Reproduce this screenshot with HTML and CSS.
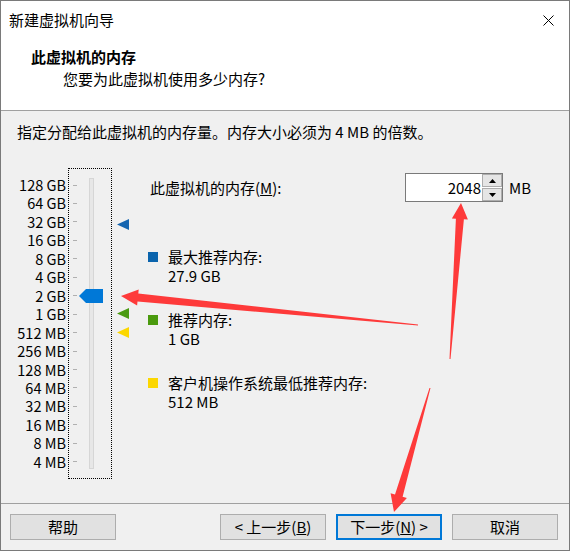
FILE: index.html
```html
<!DOCTYPE html>
<html lang="zh-CN">
<head>
  <meta charset="UTF-8">
  <meta name="viewport" content="width=device-width, initial-scale=1.0">
  <title>新建虚拟机向导</title>
  <link rel="stylesheet" href="styles.css">
</head>
<body>
  <div class="window">
    <div class="top">
      <div class="titlebar">
        <span class="title">新建虚拟机向导</span>
        <svg class="close" width="11" height="11" viewBox="0 0 11 11">
          <path d="M0.5 0.5L10.5 10.5M10.5 0.5L0.5 10.5" stroke="#000" stroke-width="1"/>
        </svg>
      </div>
      <h1>此虚拟机的内存</h1>
      <p class="subtitle">您要为此虚拟机使用多少内存?</p>
    </div>

    <div class="content">
      <p class="intro">指定分配给此虚拟机的内存量。内存大小必须为 4 MB 的倍数。</p>

      <div class="main">
        <ul class="labels">
          <li>128 GB</li>
          <li>64 GB</li>
          <li>32 GB</li>
          <li>16 GB</li>
          <li>8 GB</li>
          <li>4 GB</li>
          <li>2 GB</li>
          <li>1 GB</li>
          <li>512 MB</li>
          <li>256 MB</li>
          <li>128 MB</li>
          <li>64 MB</li>
          <li>32 MB</li>
          <li>16 MB</li>
          <li>8 MB</li>
          <li>4 MB</li>
        </ul>

        <div class="slider">
          <div class="ticks">
            <span></span><span></span><span></span><span></span>
            <span></span><span></span><span></span><span></span>
            <span></span><span></span><span></span><span></span>
            <span></span><span></span><span></span><span></span>
          </div>
          <div class="track"></div>
          <svg class="thumb" width="24" height="14" viewBox="0 0 24 14">
            <polygon points="0,7 7,0 24,0 24,14 7,14" fill="#0078d7"/>
          </svg>
        </div>

        <div class="markers">
          <svg class="marker marker-max" width="12" height="11" viewBox="0 0 12 11">
            <polygon points="0,5.5 12,0 12,11" fill="#1565b0"/>
          </svg>
          <svg class="marker marker-rec" width="12" height="11" viewBox="0 0 12 11">
            <polygon points="0,5.5 12,0 12,11" fill="#4b9a12"/>
          </svg>
          <svg class="marker marker-min" width="12" height="11" viewBox="0 0 12 11">
            <polygon points="0,5.5 12,0 12,11" fill="#fcd700"/>
          </svg>
        </div>

        <div class="settings">
          <div class="memory-row">
            <label class="memory-label">此虚拟机的内存(<u>M</u>):</label>
            <div class="spin">
              <span class="spin-value">2048</span>
              <div class="spin-buttons">
                <span class="spin-btn">
                  <svg width="7" height="4" viewBox="0 0 7 4"><polygon points="3.5,0 7,4 0,4" fill="#000"/></svg>
                </span>
                <span class="spin-btn">
                  <svg width="7" height="4" viewBox="0 0 7 4"><polygon points="0,0 7,0 3.5,4" fill="#000"/></svg>
                </span>
              </div>
            </div>
            <span class="unit">MB</span>
          </div>

          <div class="legend">
            <div class="legend-item">
              <span class="swatch swatch-max"></span>
              <div>
                <div>最大推荐内存:</div>
                <div>27.9 GB</div>
              </div>
            </div>
            <div class="legend-item">
              <span class="swatch swatch-rec"></span>
              <div>
                <div>推荐内存:</div>
                <div>1 GB</div>
              </div>
            </div>
            <div class="legend-item">
              <span class="swatch swatch-min"></span>
              <div>
                <div>客户机操作系统最低推荐内存:</div>
                <div>512 MB</div>
              </div>
            </div>
          </div>
        </div>
      </div>
    </div>

    <div class="footer">
      <button class="btn">帮助</button>
      <div class="nav">
        <button class="btn">&lt; 上一步(<u>B</u>)</button>
        <button class="btn btn-default">下一步(<u>N</u>) &gt;</button>
        <button class="btn">取消</button>
      </div>
    </div>

    <!-- red annotation arrows drawn on top of the dialog -->
    <svg class="annotations" width="570" height="551" viewBox="0 0 570 551">
      <polygon fill="#fe3a3a" points="121,296 138.7,289.6 138.3,293.6 418,324.4 418,325.6 137.5,301.6 137.1,305.6"/>
      <polygon fill="#fe3a3a" points="461,203 467.9,219.5 463.9,219.3 450.5,359 449.5,359 455.9,218.7 451.9,218.4"/>
      <polygon fill="#fe3a3a" points="394,512 406.9,498.1 402.6,496.8 430.5,388.1 429.5,387.9 395,494.6 390.6,493.3"/>
    </svg>
  </div>
</body>
</html>
```

FILE: styles.css
```css
* {
  box-sizing: border-box;
}
body {
  margin: 0;
  font-family: "Noto Sans CJK SC", "Noto Sans", sans-serif;
  font-size: 15px;
  color: #000;
  background: #f0f0f0;
}
.window {
  position: relative;
  width: 570px;
  height: 551px;
  border: 1px solid #7a7a7a;
  background: #f0f0f0;
}

/* header */
.top {
  height: 110px;
  background: #fff;
  border-bottom: 1px solid #a0a0a0;
}
.titlebar {
  height: 36px;
  padding: 9px 15px 0 8px;
  display: flex;
  justify-content: space-between;
  align-items: flex-start;
}
.title {
  line-height: 20px;
}
.close {
  margin-top: 5px;
}
h1 {
  margin: 9px 0 0 30px;
  font-size: 15px;
  font-weight: bold;
  line-height: 22px;
}
.subtitle {
  margin: 0 0 0 62px;
  line-height: 22px;
}

/* body */
.content {
  height: 392px;
  padding-top: 11px;
}
.intro {
  margin: 0 0 0 16px;
  line-height: 20px;
}
.main {
  display: flex;
  margin-top: 26px;
}
.labels {
  list-style: none;
  margin: 8px 2px 0 0;
  padding: 0;
  width: 65px;
  height: 295px;
  display: flex;
  flex-direction: column;
  justify-content: space-between;
  text-align: right;
  font-size: 14.5px;
}
.labels li {
  line-height: 18px;
  height: 18px;
}
.slider {
  position: relative;
  display: flex;
  width: 44px;
  height: 311px;
  border: 1px dotted #000;
}
.ticks {
  margin: 7px 0 0 4px;
  width: 4px;
  height: 295px;
  display: flex;
  flex-direction: column;
  justify-content: space-between;
}
.ticks span {
  height: 18px;
  display: flex;
  align-items: center;
}
.ticks span::after {
  content: "";
  width: 4px;
  height: 1px;
  background: #b0b0b0;
}
.track {
  margin: 9px 0 0 12px;
  width: 5px;
  height: 291px;
  border: 1px solid #d6d6d6;
  background: #e7e7e7;
}
.thumb {
  position: absolute;
  left: 10px;
  top: 120px;
}
.markers {
  position: relative;
  width: 12px;
  margin-left: 5px;
}
.marker {
  position: absolute;
  left: 0;
}
.marker-max { top: 51px; }
.marker-rec { top: 140px; }
.marker-min { top: 159px; }

.settings {
  margin-left: 19px;
  padding-top: 5px;
}
.memory-row {
  display: flex;
  align-items: center;
  height: 29px;
}
.memory-label {
  width: 257px;
  padding-left: 2px;
  line-height: 20px;
}
.spin {
  display: flex;
  width: 98px;
  height: 29px;
  border: 1px solid #7a7a7a;
  background: #fff;
}
.spin-value {
  flex: 1;
  text-align: right;
  padding-right: 1px;
  line-height: 27px;
}
.spin-buttons {
  display: flex;
  flex-direction: column;
  gap: 1px;
  width: 20px;
}
.spin-btn {
  flex: 1;
  display: flex;
  align-items: center;
  justify-content: center;
  background: #e5e5e5;
  border: 1px solid #adadad;
}
.unit {
  margin-left: 6px;
  line-height: 20px;
}

.legend {
  margin-top: 45px;
  display: flex;
  flex-direction: column;
  gap: 25px;
}
.legend-item {
  display: flex;
  line-height: 19px;
}
.swatch {
  width: 10px;
  height: 10px;
  margin: 5px 10px 0 0;
}
.swatch-max { background: #0a64ad; }
.swatch-rec { background: #4a9a0e; }
.swatch-min { background: #fcd700; }

/* footer */
.footer {
  display: flex;
  justify-content: space-between;
  border-top: 1px solid #a0a0a0;
  padding: 10px 11px 0 9px;
}
.nav {
  display: flex;
  gap: 10px;
}
.btn {
  width: 106px;
  height: 26px;
  padding: 0;
  font-family: inherit;
  font-size: 15px;
  line-height: 22px;
  color: #000;
  background: #e1e1e1;
  border: 1px solid #adadad;
}
.btn-default {
  border: 2px solid #0078d7;
}

.annotations {
  position: absolute;
  left: -1px;
  top: -1px;
  pointer-events: none;
}
```
